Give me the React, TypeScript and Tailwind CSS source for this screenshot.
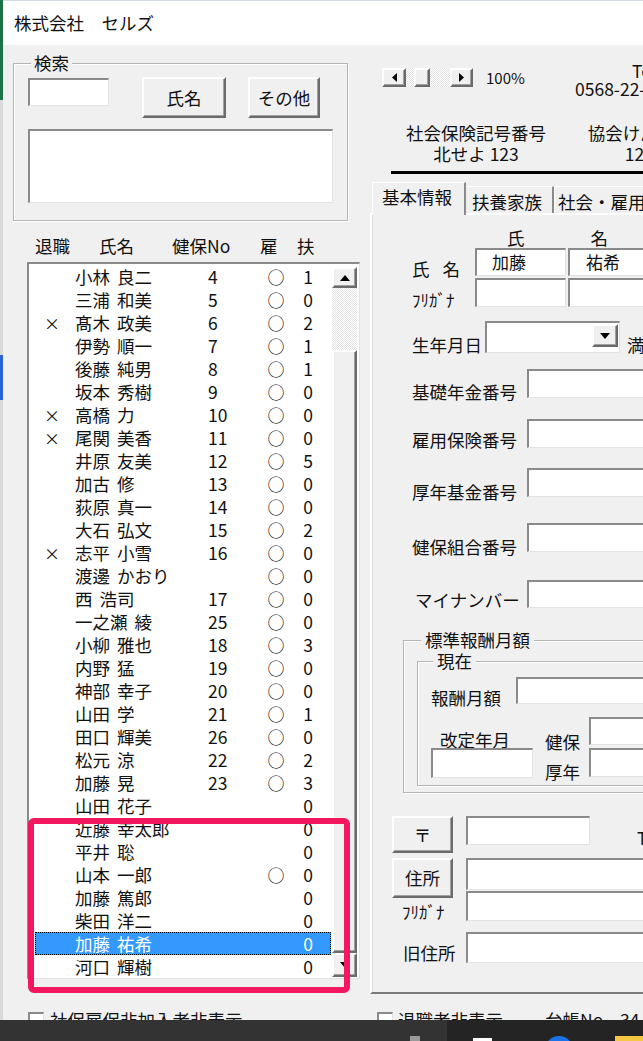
import React from 'react';

type Row = { ret?: boolean; sei: string; mei: string; no: string; emp: boolean; dep: string; sel?: boolean };

const rows: Row[] = [
  { sei: '小林', mei: '良二', no: '4', emp: true, dep: '1' },
  { sei: '三浦', mei: '和美', no: '5', emp: true, dep: '0' },
  { ret: true, sei: '髙木', mei: '政美', no: '6', emp: true, dep: '2' },
  { sei: '伊勢', mei: '順一', no: '7', emp: true, dep: '1' },
  { sei: '後藤', mei: '純男', no: '8', emp: true, dep: '1' },
  { sei: '坂本', mei: '秀樹', no: '9', emp: true, dep: '0' },
  { ret: true, sei: '高橋', mei: '力', no: '10', emp: true, dep: '0' },
  { ret: true, sei: '尾関', mei: '美香', no: '11', emp: true, dep: '0' },
  { sei: '井原', mei: '友美', no: '12', emp: true, dep: '5' },
  { sei: '加古', mei: '修', no: '13', emp: true, dep: '0' },
  { sei: '荻原', mei: '真一', no: '14', emp: true, dep: '0' },
  { sei: '大石', mei: '弘文', no: '15', emp: true, dep: '2' },
  { ret: true, sei: '志平', mei: '小雪', no: '16', emp: true, dep: '0' },
  { sei: '渡邊', mei: 'かおり', no: '', emp: true, dep: '0' },
  { sei: '西', mei: '浩司', no: '17', emp: true, dep: '0' },
  { sei: '一之瀬', mei: '綾', no: '25', emp: true, dep: '0' },
  { sei: '小柳', mei: '雅也', no: '18', emp: true, dep: '3' },
  { sei: '内野', mei: '猛', no: '19', emp: true, dep: '0' },
  { sei: '神部', mei: '幸子', no: '20', emp: true, dep: '0' },
  { sei: '山田', mei: '学', no: '21', emp: true, dep: '1' },
  { sei: '田口', mei: '輝美', no: '26', emp: true, dep: '0' },
  { sei: '松元', mei: '涼', no: '22', emp: true, dep: '2' },
  { sei: '加藤', mei: '晃', no: '23', emp: true, dep: '3' },
  { sei: '山田', mei: '花子', no: '', emp: false, dep: '0' },
  { sei: '近藤', mei: '幸太郎', no: '', emp: false, dep: '0' },
  { sei: '平井', mei: '聡', no: '', emp: false, dep: '0' },
  { sei: '山本', mei: '一郎', no: '', emp: true, dep: '0' },
  { sei: '加藤', mei: '篤郎', no: '', emp: false, dep: '0' },
  { sei: '柴田', mei: '洋二', no: '', emp: false, dep: '0' },
  { sei: '加藤', mei: '祐希', no: '', emp: false, dep: '0', sel: true },
  { sei: '河口', mei: '輝樹', no: '', emp: false, dep: '0' },
];

// win32-ish 3D borders
const sunken =
  'bg-white border-t-2 border-l-2 border-r border-b border-t-[#8a8a8a] border-l-[#8a8a8a] border-r-[#e3e3e3] border-b-[#e3e3e3]';
const raised =
  'bg-[#f0f0f0] border-2 border-t-white border-l-white border-r-[#6b6b6b] border-b-[#6b6b6b] shadow-[inset_-1px_-1px_0_#a0a0a0]';
const group = 'border border-[#b4b4b4] shadow-[inset_1px_1px_0_#fff,1px_1px_0_#fff]';

function Tri({ down = false }: { down?: boolean }) {
  return (
    <svg width="10" height="6" viewBox="0 0 10 6">
      <polygon points={down ? '0,0 10,0 5,6' : '0,6 10,6 5,0'} fill="#000" />
    </svg>
  );
}

function SmallTri({ dir }: { dir: 'left' | 'right' }) {
  return (
    <svg width="5" height="9" viewBox="0 0 5 9">
      <polygon points={dir === 'left' ? '5,0 5,9 0,4.5' : '0,0 0,9 5,4.5'} fill="#000" />
    </svg>
  );
}

function EdgeStrip() {
  return (
    <div className="w-[3px] shrink-0 flex flex-col">
      <div className="h-[100px] bg-[#1e7145]" />
      <div className="h-[255px] bg-[#dadada]" />
      <div className="h-[45px] bg-[#2b62d6]" />
      <div className="flex-1 bg-[#dadada]" />
    </div>
  );
}

function LeftPane() {
  return (
    <div className="w-[359px] shrink-0 relative flex flex-col">
      {/* 検索 group */}
      <fieldset className={`${group} shrink-0 ml-[10px] mt-[8px] w-[335px] px-[14px] pb-[17px]`}>
        <legend className="ml-[3px] px-[3px] bg-[#f0f0f0] leading-[20px]">検索</legend>
        <div className="flex items-start mt-[4px]">
          <div className={`${sunken} w-[81px] h-[28px] mt-[1px]`} />
          <button className={`${raised} ml-[33px] w-[84px] h-[41px] flex items-center justify-center`}>氏名</button>
          <button className={`${raised} ml-[22px] w-[72px] h-[41px] flex items-center justify-center`}>その他</button>
        </div>
        <div className={`${sunken} mt-[11px] w-[305px] h-[74px]`} />
      </fieldset>

      {/* list header */}
      <div className="shrink-0 mt-[13px] h-[24px] flex items-center pl-[32px] whitespace-nowrap">
        <span className="w-[64px]">退職</span>
        <span className="w-[73px]">氏名</span>
        <span className="w-[88px]">健保No</span>
        <span className="w-[37px]">雇</span>
        <span>扶</span>
      </div>

      {/* employee list */}
      <div className={`${sunken} shrink-0 ml-[24px] mt-[4px] w-[333px] h-[717px] flex overflow-hidden`}>
        <div className="w-[303px] pt-[1px] flex flex-col">
          {rows.map((r, i) => (
            <div
              key={i}
              className={`ml-[6px] w-[296px] h-[23px] shrink-0 flex items-center whitespace-nowrap ${
                r.sel ? 'bg-[#3399ff] text-white outline-1 outline-dotted outline-black -outline-offset-1' : ''
              }`}
            >
              <span className="w-[34px] text-center text-[16px]">{r.ret ? '×' : ''}</span>
              <span className="ml-[6px] w-[133px] flex gap-[7px]">
                <span>{r.sei}</span>
                <span>{r.mei}</span>
              </span>
              <span className="w-[56px]">{r.no}</span>
              <span className="w-[24px] text-center text-[17px] leading-[20px]">{r.emp ? '○' : ''}</span>
              <span className="w-[40px] text-center">{r.dep}</span>
            </div>
          ))}
        </div>
        <div className="w-[25px] pt-[3px] flex flex-col">
          <div className={`${raised} h-[21px] shrink-0 flex items-center justify-center`}>
            <Tri />
          </div>
          <div className="h-[62px] shrink-0 bg-[repeating-conic-gradient(#ffffff_0%_25%,#e2e2e2_0%_50%)] bg-[length:2px_2px]" />
          <div className={`${raised} h-[603px] shrink-0`} />
          <div className={`${raised} h-[24px] shrink-0 flex items-center justify-center`}>
            <Tri down />
          </div>
        </div>
      </div>

      <div className="shrink-0 ml-[25px] mt-[31px] h-[20px] flex items-center whitespace-nowrap">
        <span className={`${sunken} w-[16px] h-[16px]`} />
        <span className="ml-[6px]">社保雇保非加入者非表示</span>
      </div>

      {/* highlight annotation */}
      <div className="absolute left-[25px] top-[773px] w-[322px] h-[175px] border-[6px] border-[#f2175f] rounded-[6px] pointer-events-none" />
    </div>
  );
}

function Field({ label, mt, lmt, narrow = false, disabled = false }: {
  label: string; mt: string; lmt: string; narrow?: boolean; disabled?: boolean;
}) {
  return (
    <div className={`flex items-start shrink-0 ${narrow ? 'h-[28px]' : 'h-[29px]'} ${mt}`}>
      <span className={`whitespace-nowrap ${lmt} ${narrow ? 'ml-[43px] w-[112px]' : 'ml-[40px] w-[115px]'}`}>
        {label}
      </span>
      <div className={`${sunken} w-[200px] h-full ${disabled ? 'bg-[#f0f0f0]' : ''}`} />
    </div>
  );
}

function RightPane() {
  return (
    <div className="flex-1 min-w-0 flex flex-col">
      {/* zoom + tel */}
      <div className="shrink-0 mt-[17px] flex items-start">
        <div className="w-[213px] shrink-0 pl-[20px] pt-[6px] flex items-start">
          <div className="flex h-[19px]">
            <div className={`${raised} w-[24px] flex items-center justify-center`}>
              <SmallTri dir="left" />
            </div>
            <div className="w-[44px] flex bg-[repeating-conic-gradient(#ffffff_0%_25%,#e2e2e2_0%_50%)] bg-[length:2px_2px]">
              <div className="w-[8px]" />
              <div className={`${raised} w-[16px]`} />
            </div>
            <div className={`${raised} w-[23px] flex items-center justify-center`}>
              <SmallTri dir="right" />
            </div>
          </div>
          <span className="ml-[13px] text-[15px] leading-[19px]">100%</span>
        </div>
        <div className="leading-[18px] whitespace-nowrap">
          <div className="pl-[57px]">Tel</div>
          <div>0568-22-1234</div>
        </div>
      </div>

      {/* insurance numbers */}
      <div className="shrink-0 mt-[24px] flex leading-[21px] whitespace-nowrap">
        <div className="ml-[39px] w-[150px] shrink-0 text-center">
          <div>社会保険記号番号</div>
          <div>北せよ 123</div>
        </div>
        <div className="ml-[36px] w-[124px] shrink-0 text-center">
          <div>協会けんぽ番号</div>
          <div>12345</div>
        </div>
      </div>
      <div className="mt-[7px] ml-[29px] w-[300px] h-[3px] shrink-0 bg-black" />

      {/* tabs */}
      <div className="mt-[8px] h-[31px] shrink-0 flex items-end pl-[10px] whitespace-nowrap">
        <div className="relative z-10 mb-[-2px] h-[33px] w-[94px] shrink-0 bg-[#f0f0f0] border-t border-l border-white border-r-2 border-r-[#8a8a8a] pl-[9px] pt-[4px]">
          基本情報
        </div>
        <div className="h-[27px] w-[88px] shrink-0 border-t border-white border-r-2 border-r-[#8a8a8a] pl-[6px] pt-[5px]">
          扶養家族
        </div>
        <div className="h-[27px] w-[140px] shrink-0 border-t border-l border-white pl-[3px] pt-[5px]">
          社会・雇用保険
        </div>
      </div>

      {/* tab page */}
      <div className="ml-[8px] w-[420px] h-[781px] shrink-0 border-t-2 border-l-2 border-b-2 border-t-white border-l-white border-b-[#7a7a7a] shadow-[inset_1px_0_0_#d9d9d9] flex flex-col whitespace-nowrap">
        <div className="shrink-0 mt-[13px] h-[20px] flex">
          <span className="ml-[135px]">氏</span>
          <span className="ml-[66px]">名</span>
        </div>
        <div className="shrink-0 flex items-start h-[28px]">
          <span className="ml-[40px] w-[63px] mt-[11px] flex gap-[13px]">
            <span>氏</span>
            <span>名</span>
          </span>
          <div className={`${sunken} w-[91px] h-[28px] pl-[15px] pt-[2px] text-[17px]`}>加藤</div>
          <div className={`${sunken} ml-[2px] w-[91px] h-[28px] pl-[16px] pt-[2px] text-[17px]`}>祐希</div>
        </div>
        <div className="shrink-0 mt-[2px] flex items-start h-[29px]">
          <span className="ml-[40px] w-[63px] mt-[12px] text-[17px]">ﾌﾘｶﾞﾅ</span>
          <div className={`${sunken} w-[91px] h-[29px]`} />
          <div className={`${sunken} ml-[2px] w-[91px] h-[29px]`} />
        </div>
        <div className="shrink-0 mt-[14px] flex items-start h-[32px]">
          <span className="ml-[40px] w-[73px] mt-[14px]">生年月日</span>
          <div className={`${sunken} w-[135px] h-[32px] flex justify-end items-start`}>
            <div className={`${raised} mt-[1px] mr-[1px] w-[26px] h-[23px] flex items-center justify-center`}>
              <Tri down />
            </div>
          </div>
          <span className="ml-[7px] mt-[14px]">満年齢</span>
        </div>
        <Field label="基礎年金番号" mt="mt-[16px]" lmt="mt-[13px]" />
        <Field label="雇用保険番号" mt="mt-[21px]" lmt="mt-[11px]" />
        <Field label="厚年基金番号" mt="mt-[20px]" lmt="mt-[14px]" />
        <Field label="健保組合番号" mt="mt-[26px]" lmt="mt-[14px]" />
        <Field label="マイナンバー" mt="mt-[28px]" lmt="mt-[10px]" narrow disabled />

        {/* 標準報酬月額 */}
        <fieldset className={`${group} shrink-0 mt-[22px] ml-[31px] w-[300px] pl-[13px] pb-[6px]`}>
          <legend className="ml-[4px] px-[4px] bg-[#f0f0f0] leading-[20px]">標準報酬月額</legend>
          <fieldset className={`${group} mt-[1px] w-[300px] pl-[13px] pb-[7px]`}>
            <legend className="ml-[2px] px-[4px] bg-[#f0f0f0] leading-[20px]">現在</legend>
            <div className="mt-[6px] h-[27px] flex items-start">
              <span className="w-[85px] mt-[11px]">報酬月額</span>
              <div className={`${sunken} w-[150px] h-[27px]`} />
            </div>
            <div className="flex items-start">
              <div className="w-[102px] flex flex-col">
                <span className="pl-[9px] mt-[27px] leading-[18px]">改定年月</span>
                <div className={`${sunken} mt-[-1px] w-[102px] h-[30px]`} />
              </div>
              <div className="ml-[12px] flex flex-col">
                <div className="mt-[13px] h-[28px] flex items-start">
                  <span className="w-[44px] mt-[15px]">健保</span>
                  <div className={`${sunken} w-[80px] h-[28px]`} />
                </div>
                <div className="mt-[3px] h-[29px] flex items-start">
                  <span className="w-[44px] mt-[14px]">厚年</span>
                  <div className={`${sunken} w-[80px] h-[29px]`} />
                </div>
              </div>
            </div>
          </fieldset>
        </fieldset>

        {/* address */}
        <div className="shrink-0 mt-[23px] h-[37px] flex items-start">
          <button className={`${raised} ml-[20px] w-[61px] h-[37px] flex items-center justify-center`}>〒</button>
          <div className={`${sunken} ml-[13px] w-[124px] h-[29px]`} />
          <span className="ml-[47px] mt-[12px]">TEL</span>
        </div>
        <div className="shrink-0 mt-[5px] h-[64px] flex items-start">
          <div className="ml-[20px] w-[61px] flex flex-col">
            <button className={`${raised} h-[40px] flex items-center justify-center`}>住所</button>
            <span className="mt-[4px] pl-[10px] text-[17px]">ﾌﾘｶﾞﾅ</span>
          </div>
          <div className="ml-[13px] flex flex-col">
            <div className={`${sunken} w-[300px] h-[32px]`} />
            <div className={`${sunken} mt-[1px] w-[300px] h-[30px]`} />
          </div>
        </div>
        <div className="shrink-0 mt-[10px] h-[31px] flex items-start">
          <span className="ml-[31px] w-[63px] mt-[11px]">旧住所</span>
          <div className={`${sunken} w-[300px] h-[31px]`} />
        </div>
      </div>

      <div className="shrink-0 mt-[16px] h-[20px] flex items-center whitespace-nowrap">
        <span className={`${sunken} ml-[15px] w-[16px] h-[16px] shrink-0`} />
        <span className="ml-[5px] w-[147px] shrink-0">退職者非表示</span>
        <span className="w-[75px] shrink-0">台帳No.</span>
        <span>34</span>
      </div>
    </div>
  );
}

function Taskbar() {
  return (
    <div className="h-[21px] shrink-0 flex overflow-hidden">
      <div className="w-[447px] shrink-0 bg-[#333333] flex items-start">
        <div className="ml-[410px] mt-[16px] w-[10px] h-[5px] bg-[#9a9a9a]" />
      </div>
      <div className="flex-1 bg-[#242424] flex items-start">
        <div className="ml-[26px] mt-[18px] w-[19px] h-[3px] bg-white" />
        <div className="ml-[53px] mt-[16px] w-[28px] h-[28px] shrink-0 rounded-full bg-[#1a73e8]" />
        <div className="ml-[42px] mt-[16px] w-[28px] h-[10px] shrink-0 bg-[#f6c744]" />
      </div>
    </div>
  );
}

export default function App() {
  return (
    <div className="w-[643px] h-[1041px] overflow-hidden flex flex-col bg-[#f0f0f0] text-[#111] font-['Noto_Sans_CJK_JP','Noto_Sans',sans-serif] text-[17.5px] leading-[20px]">
      <div className="flex h-[1020px] shrink-0">
        <EdgeStrip />
        <div className="flex-1 min-w-0 flex flex-col">
          <div className="h-[45px] shrink-0 bg-white border-t border-[#d4dbe3] flex items-center pl-[11px] whitespace-nowrap">
            株式会社　セルズ
          </div>
          <div className="flex-1 min-h-0 flex overflow-hidden">
            <LeftPane />
            <RightPane />
          </div>
        </div>
      </div>
      <Taskbar />
    </div>
  );
}
